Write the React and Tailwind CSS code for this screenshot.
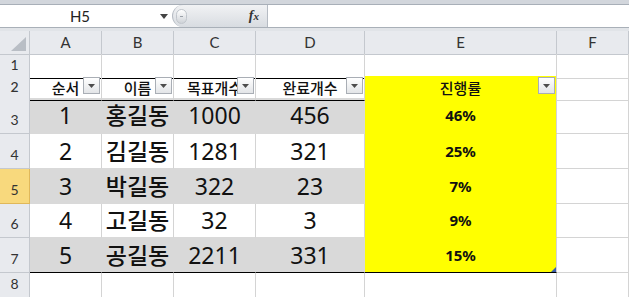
import React from "react";

const GRID = "grid grid-cols-[30px_72px_72px_82px_109px_192px_72px]";
const sheetFont = { fontFamily: '"Noto Sans", "Noto Sans CJK KR", sans-serif' };

const rows = [
    { n: 3, seq: "1", name: "홍길동", goal: "1000", done: "456", rate: "46%", gray: true, h: "h-[36px]" },
    { n: 4, seq: "2", name: "김길동", goal: "1281", done: "321", rate: "25%", gray: false, h: "h-[35px]" },
    { n: 5, seq: "3", name: "박길동", goal: "322", done: "23", rate: "7%", gray: true, h: "h-[35px]", selected: true },
    { n: 6, seq: "4", name: "고길동", goal: "32", done: "3", rate: "9%", gray: false, h: "h-[34px]" },
    { n: 7, seq: "5", name: "공길동", goal: "2211", done: "331", rate: "15%", gray: true, h: "h-[35px]", last: true },
];

function FilterButton() {
    return (
        <span className="absolute right-[1px] top-[1px] w-[17px] h-[17px] border border-[#a9aeb5] bg-gradient-to-b from-white to-[#e3e5e8] flex items-center justify-center">
            <svg width="7" height="4" viewBox="0 0 7 4">
                <path d="M0 0 L7 0 L3.5 4 Z" fill="#4d4d4d" />
            </svg>
        </span>
    );
}

function RowHead({ children, selected, h }) {
    return (
        <div
            className={`flex items-end justify-center pb-[3px] border-r border-b text-[14px] text-[#333] ${h || ""} ${
                selected ? "bg-[#f8d97d] border-[#e0b85a]" : "bg-[#e8eaee] border-[#c4c8ce]"
            }`}
            style={{ fontFamily: "Lato, sans-serif" }}
        >
            {children}
        </div>
    );
}

export default function App() {
    return (
        <div className="w-[629px] h-[297px] overflow-hidden bg-white">
            {/* ribbon edge */}
            <div className="h-[5px] bg-[#d2d6dc] border-b border-[#a8afb8]" />

            {/* formula bar */}
            <div className="flex h-[23px] bg-white border-b border-[#a9b0b8]">
                <div className="w-[172px] flex items-center">
                    <span className="flex-1 text-center text-[15px] text-[#222]" style={{ fontFamily: "Lato, sans-serif" }}>
                        H5
                    </span>
                    <svg width="8" height="5" viewBox="0 0 8 5" className="mr-[4px]">
                        <path d="M0 0 L8 0 L4 5 Z" fill="#444" />
                    </svg>
                </div>
                <div className="w-[95px] h-full rounded-l-full bg-gradient-to-b from-[#f1f2f4] to-[#d8dce1] border-l border-[#b5bbc3] flex items-center justify-between pl-[3px] pr-[8px]">
                    <span className="w-[11px] h-[15px] rounded-full bg-gradient-to-b from-[#ffffff] to-[#cfd3d8] border border-[#c1c6cc] flex items-center justify-center">
                        <span className="w-[3px] h-[1px] bg-[#9aa0a8]" />
                    </span>
                    <span className="italic font-bold text-[14px] text-[#333] leading-none" style={{ fontFamily: '"Liberation Serif", serif' }}>
                        f<span className="text-[11px]">x</span>
                    </span>
                </div>
                <div className="flex-1 border-l border-[#b5bbc3] bg-white" />
            </div>
            <div className="h-[3px] bg-[#e1e4e8]" />

            {/* column headers */}
            <div className={`${GRID} h-[23px] bg-[#e8eaee] text-[15px] text-[#333]`} style={{ fontFamily: "Lato, sans-serif" }}>
                <div className="relative border-r border-b border-[#c4c8ce]">
                    <svg width="15" height="14" viewBox="0 0 15 14" className="absolute right-[3px] bottom-[3px]">
                        <path d="M15 0 L15 14 L0 14 Z" fill="#b9bec5" />
                    </svg>
                </div>
                {["A", "B", "C", "D", "E", "F"].map((c) => (
                    <div key={c} className="flex items-center justify-center border-r border-b border-[#c4c8ce]">
                        {c}
                    </div>
                ))}
            </div>

            <div style={sheetFont}>
                {/* row 1 */}
                <div className={`${GRID} h-[22px]`}>
                    <RowHead>1</RowHead>
                    {[0, 1, 2, 3, 4].map((i) => (
                        <div key={i} className="border-r border-r-[#d4d4d4] border-b border-b-black" />
                    ))}
                    <div className="border-r border-b border-[#d4d4d4]" />
                </div>

                {/* row 2: table header */}
                <div className={`${GRID} h-[22px] text-[15px] font-medium text-[#111]`}>
                    <RowHead>2</RowHead>
                    {["순서", "이름", "목표개수", "완료개수"].map((t) => (
                        <div key={t} className="relative flex items-center justify-center overflow-hidden border-r border-r-[#d4d4d4] border-b border-b-black">
                            <span className="leading-none whitespace-nowrap">{t}</span>
                            <FilterButton />
                        </div>
                    ))}
                    <div className="relative flex items-center justify-center bg-[#ffff00] border-r border-r-[#d4d4d4] border-b border-b-black">
                        <span className="leading-none">진행률</span>
                        <FilterButton />
                    </div>
                    <div className="border-r border-b border-[#d4d4d4]" />
                </div>

                {/* data rows */}
                {rows.map((r) => {
                    const fill = r.gray ? "bg-[#d9d9d9] border-r-[#d9d9d9]" : "bg-white border-r-[#d4d4d4]";
                    const bottom = r.last ? "border-b-black" : "border-b-[#d9d9d9]";
                    const cell = `flex items-center justify-center leading-none border-r border-b ${fill} ${bottom}`;
                    return (
                        <div key={r.n} className={`${GRID} ${r.h} text-[23px] text-[#111]`}>
                            <RowHead selected={r.selected}>{r.n}</RowHead>
                            <div className={cell}>{r.seq}</div>
                            <div className={`${cell} font-medium text-[23px]`}>{r.name}</div>
                            <div className={cell}>{r.goal}</div>
                            <div className={cell}>{r.done}</div>
                            <div
                                className={`relative flex items-center justify-center bg-[#ffff00] border-r border-r-[#d4d4d4] border-b text-[15px] font-bold ${
                                    r.last ? "border-b-black" : "border-b-[#ffff00]"
                                }`}
                            >
                                {r.rate}
                                {r.last && (
                                    <svg width="5" height="5" viewBox="0 0 5 5" className="absolute right-0 bottom-0">
                                        <path d="M5 0 L5 5 L0 5 Z" fill="#3d5fa8" />
                                    </svg>
                                )}
                            </div>
                            <div className="border-r border-b border-[#d4d4d4]" />
                        </div>
                    );
                })}

                {/* row 8 */}
                <div className={`${GRID} h-[23px]`}>
                    <RowHead>8</RowHead>
                    {[0, 1, 2, 3, 4, 5].map((i) => (
                        <div key={i} className="border-r border-b border-[#d4d4d4]" />
                    ))}
                </div>

                {/* row 9, mostly below the fold */}
                <div className={`${GRID} h-[22px]`}>
                    <RowHead />
                    {[0, 1, 2, 3, 4, 5].map((i) => (
                        <div key={i} className="border-r border-b border-[#d4d4d4]" />
                    ))}
                </div>
            </div>
        </div>
    );
}
